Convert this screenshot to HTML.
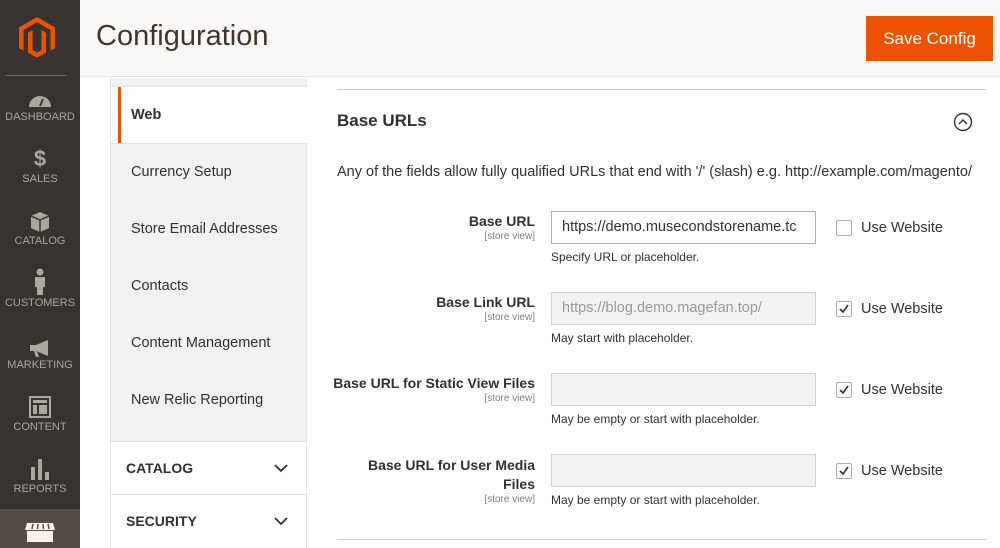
<!DOCTYPE html>
<html><head><meta charset="utf-8"><style>
*{box-sizing:border-box;margin:0;padding:0}
body{width:1000px;height:548px;overflow:hidden;font-family:"Liberation Sans",sans-serif;background:#fff;position:relative;color:#333}
.sb{position:absolute;left:0;top:0;width:80px;height:548px;background:#373330}
.sb .it{position:absolute;left:0;width:80px;text-align:center;color:#aaa6a0;font-size:11px}
.sb .ic{position:absolute;left:0;width:80px}
.sb svg{display:block;margin:0 auto}
.hdr{position:absolute;left:80px;top:0;width:920px;height:77px;background:#f8f8f8;border-bottom:1px solid #e3e3e3}
.hdr h1{position:absolute;left:16px;top:20px;font-size:29px;font-weight:normal;color:#41362f}
.btn{position:absolute;left:786px;top:16px;width:127px;height:45px;background:#eb5202;color:#fff;font-size:17px;line-height:45px;text-align:center}
.nv{position:absolute;font-size:14.5px;color:#303030}
.lab{position:absolute;width:240px;left:295px;text-align:right;font-size:14px;font-weight:bold;color:#303030;white-space:nowrap}
.sv{display:block;font-size:10px;font-weight:normal;color:#808080;margin-top:2px}
.inp{position:absolute;left:551px;width:265px;height:33px;border:1px solid #adadad;background:#fff;font-size:14.5px;line-height:31px;padding-left:10px;color:#303030;overflow:hidden;white-space:nowrap}
.inp.d{background:#f2f2f2;border-color:#d0d0d0;color:#999}
.note{position:absolute;left:551px;font-size:12px;color:#303030}
.cb{position:absolute;left:836px;width:16px;height:16px;border:1px solid #adadad;border-radius:2px;background:#fff}
.uw{position:absolute;left:861px;font-size:14.5px;color:#303030}
</style></head><body>
<div class="sb">
<svg style="position:absolute;left:19px;top:17px" width="36" height="42" viewBox="0 0 36 42"><path d="M18 0L36 10.4V31.2L31.5 33.8V13L18 5.2 4.5 13V33.8L0 31.2V10.4Z" fill="#eb5202"/><path d="M9 15.6L13.5 13V33L18 35.6 22.5 33V13L27 15.6V35.6L18 40.8 9 35.6Z" fill="#eb5202"/></svg>
<div style="position:absolute;left:6px;top:75px;width:60px;height:1px;background:#736963"></div>
<div class="ic" style="top:92px"><svg width="24" height="16"><path d="M1 15A11 11 0 0 1 23 15Z" fill="#aaa6a0"/><path d="M12 14L15 7" stroke="#373330" stroke-width="2"/></svg></div>
<div class="it" style="top:111px">DASHBOARD</div>
<div class="ic" style="top:148px;text-align:center;font-size:22px;font-weight:bold;color:#aaa6a0;line-height:22px">$</div>
<div class="it" style="top:173px">SALES</div>
<div class="ic" style="top:211px"><svg width="20" height="22"><path d="M10 1L19 5V17L10 21 1 17V5Z" fill="#aaa6a0"/><path d="M1 5L10 9 19 5M10 9V21" stroke="#373330" stroke-width="1.5" fill="none"/></svg></div>
<div class="it" style="top:235px">CATALOG</div>
<div class="ic" style="top:268px"><svg width="14" height="28"><circle cx="7" cy="4" r="3.5" fill="#aaa6a0"/><path d="M2 9H12V19H10V27H4V19H2Z" fill="#aaa6a0"/></svg></div>
<div class="it" style="top:297px">CUSTOMERS</div>
<div class="ic" style="top:338px"><svg width="24" height="20"><path d="M2 7H8L20 2V18L8 13H2Z M6 13L8 19H11L9 13Z" fill="#aaa6a0"/></svg></div>
<div class="it" style="top:359px">MARKETING</div>
<div class="ic" style="top:396px"><svg width="22" height="22"><rect x="1" y="1" width="20" height="20" fill="none" stroke="#aaa6a0" stroke-width="2"/><rect x="4" y="4" width="14" height="3" fill="#aaa6a0"/><rect x="4" y="9" width="4" height="9" fill="#aaa6a0"/><rect x="10" y="9" width="8" height="9" fill="#aaa6a0"/></svg></div>
<div class="it" style="top:421px">CONTENT</div>
<div class="ic" style="top:459px"><svg width="22" height="21"><rect x="2" y="8" width="4" height="13" fill="#aaa6a0"/><rect x="9" y="0" width="4" height="21" fill="#aaa6a0"/><rect x="16" y="13" width="4" height="8" fill="#aaa6a0"/></svg></div>
<div class="it" style="top:483px">REPORTS</div>
<div style="position:absolute;left:0;top:509px;width:80px;height:39px;background:#524d49"></div>
<svg style="position:absolute;left:24px;top:522px" width="32" height="20"><path d="M3 1H29L31 8H1Z" fill="#f7f3eb"/><path d="M3 9H29V20H3Z" fill="#f7f3eb"/><path d="M9 2L8 7M14 2L13.5 7M19 2L19.5 7M24 2L25 7" stroke="#524d49" stroke-width="1.5"/></svg>
</div>
<div class="hdr"><h1>Configuration</h1><div class="btn">Save Config</div></div>

<div style="position:absolute;left:110px;top:78px;width:197px;height:9px;background:#f1f1f1;border:1px solid #e3e3e3;border-top:none"></div>
<div style="position:absolute;left:110px;top:87px;width:197px;height:461px;border-left:1px solid #e3e3e3;border-right:1px solid #e3e3e3"></div>
<div style="position:absolute;left:118px;top:87px;width:189px;height:56px;background:#fff;border-left:3px solid #eb5202"></div>
<div style="position:absolute;left:131px;top:107px;font-size:14.5px;font-weight:bold;color:#303030">Web</div>
<div style="position:absolute;left:111px;top:143px;width:195px;height:298px;background:#f1f1f1;border-top:1px solid #e3e3e3"></div>
<div class="nv" style="top:164px;left:131px">Currency Setup</div>
<div class="nv" style="top:221px;left:131px">Store Email Addresses</div>
<div class="nv" style="top:278px;left:131px">Contacts</div>
<div class="nv" style="top:335px;left:131px">Content Management</div>
<div class="nv" style="top:392px;left:131px">New Relic Reporting</div>
<div style="position:absolute;left:110px;top:441px;width:197px;height:1px;background:#e3e3e3"></div>
<div style="position:absolute;left:110px;top:494px;width:197px;height:1px;background:#e3e3e3"></div>
<div style="position:absolute;left:126px;top:460px;font-size:14px;font-weight:bold;color:#303030">CATALOG</div>
<div style="position:absolute;left:126px;top:513px;font-size:14px;font-weight:bold;color:#303030">SECURITY</div>
<svg style="position:absolute;left:274px;top:463px" width="14" height="10"><path d="M1 2L7 8 13 2" stroke="#303030" stroke-width="1.8" fill="none"/></svg>
<svg style="position:absolute;left:274px;top:516px" width="14" height="10"><path d="M1 2L7 8 13 2" stroke="#303030" stroke-width="1.8" fill="none"/></svg>

<div style="position:absolute;left:337px;top:89px;width:649px;height:1px;background:#cccccc"></div>
<div style="position:absolute;left:337px;top:111px;font-size:17px;font-weight:bold;color:#303030">Base URLs</div>
<svg style="position:absolute;left:953px;top:112px" width="20" height="20"><circle cx="10" cy="10" r="8.5" stroke="#303030" stroke-width="1.4" fill="none"/><path d="M6 12L10 8 14 12" stroke="#303030" stroke-width="1.4" fill="none"/></svg>
<div style="position:absolute;left:337px;top:164px;font-size:14.5px;color:#303030;white-space:nowrap">Any of the fields allow fully qualified URLs that end with '/' (slash) e.g. http://example.com/magento/</div>

<div class="lab" style="top:213px">Base URL<span class="sv">[store view]</span></div>
<div class="inp" style="top:211px">https://demo.musecondstorename.tc</div>
<div class="note" style="top:250px">Specify URL or placeholder.</div>
<div class="cb" style="top:220px"></div><div class="uw" style="top:220px">Use Website</div>

<div class="lab" style="top:294px">Base Link URL<span class="sv">[store view]</span></div>
<div class="inp d" style="top:292px">https://blog.demo.magefan.top/</div>
<div class="note" style="top:331px">May start with placeholder.</div>
<div class="cb" style="top:301px"><svg width="14" height="14"><path d="M3 7L6 10 11 3" stroke="#303030" stroke-width="1.6" fill="none"/></svg></div><div class="uw" style="top:301px">Use Website</div>

<div class="lab" style="top:375px">Base URL for Static View Files<span class="sv">[store view]</span></div>
<div class="inp d" style="top:373px"></div>
<div class="note" style="top:412px">May be empty or start with placeholder.</div>
<div class="cb" style="top:382px"><svg width="14" height="14"><path d="M3 7L6 10 11 3" stroke="#303030" stroke-width="1.6" fill="none"/></svg></div><div class="uw" style="top:382px">Use Website</div>

<div class="lab" style="top:456px;line-height:19px">Base URL for User Media<br>Files<span class="sv" style="margin-top:0;line-height:12px">[store view]</span></div>
<div class="inp d" style="top:454px"></div>
<div class="note" style="top:493px">May be empty or start with placeholder.</div>
<div class="cb" style="top:463px"><svg width="14" height="14"><path d="M3 7L6 10 11 3" stroke="#303030" stroke-width="1.6" fill="none"/></svg></div><div class="uw" style="top:463px">Use Website</div>

<div style="position:absolute;left:337px;top:539px;width:649px;height:1px;background:#cccccc"></div>
</body></html>
